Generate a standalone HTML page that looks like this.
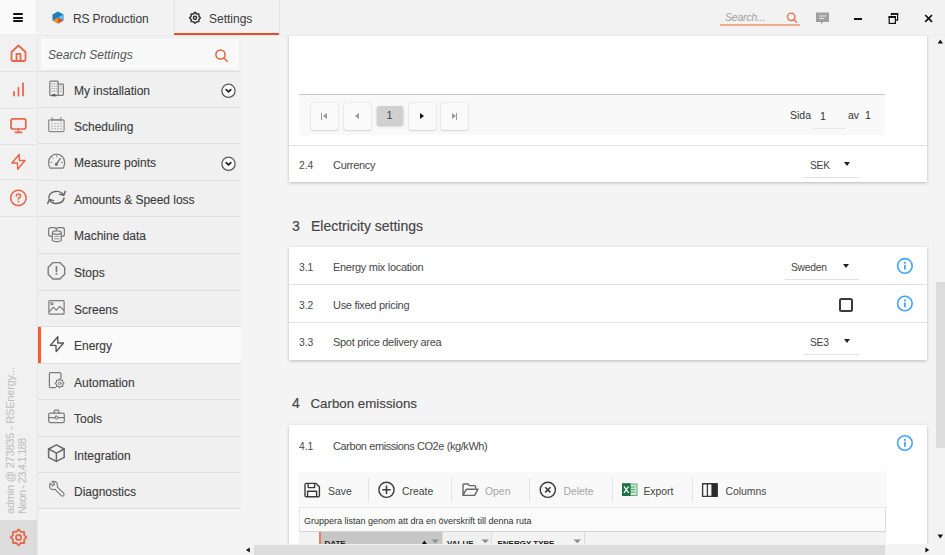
<!DOCTYPE html>
<html><head><meta charset="utf-8">
<style>
*{box-sizing:border-box;margin:0;padding:0}
html,body{width:945px;height:555px;overflow:hidden;background:#f4f4f4;font-family:"Liberation Sans",sans-serif;color:#333}
.abs{position:absolute}
/* rail */
#rail{position:absolute;left:0;top:0;width:38px;height:555px;background:#f1f1f1;border-right:1px solid #e6e6e6}
#burger{position:absolute;left:0;top:0;width:36px;height:34px;background:#fafafa;border-bottom:1px solid #ebebeb;height:35px}
.rl{position:absolute;left:0;width:36px;height:1px;background:#e3e3e3}
#gearbox{position:absolute;left:0;top:520px;width:37px;height:35px;background:#dcdcdc}
/* tabbar */
#tabbar{position:absolute;z-index:2;left:37px;top:0;width:908px;height:36px;background:#f2f2f2;border-bottom:1px solid #ebebeb}
.tabtxt{position:absolute;font-size:12px;color:#3a3a3a;white-space:nowrap}
/* sidebar */
#side{position:absolute;left:38px;top:35px;width:204px;height:520px;background:#f4f4f4}
#sidelist{position:absolute;left:0;top:0;width:203px;height:474px;background:#f0f0f0}
#search{position:absolute;left:3px;top:4px;width:198px;height:30px;background:#f9f9f9}
.item{position:absolute;left:0;width:203px;height:36.5px;border-top:1px solid #dedede}
.item .t{position:absolute;left:36px;top:12px;font-size:12px;color:#3c3c3c;white-space:nowrap;-webkit-text-stroke:0.12px #3c3c3c}
.item.sel{background:#fafafa}
.item.sel::before{content:"";position:absolute;left:0;top:0;width:3px;height:100%;background:#f65c2c}

.ov{position:absolute;left:0;top:0;pointer-events:none}
/* main */
.card{position:absolute;left:289px;width:638px;background:#fff;box-shadow:0 1px 3px rgba(0,0,0,.24)}
.row{position:absolute;left:0;width:638px;border-top:1px solid #e1e1e1}
.num{position:absolute;left:11px;padding-top:1px;font-size:10.3px;color:#4a4a4a;white-space:nowrap}
.lbl{position:absolute;left:45px;font-size:11px;color:#484848;white-space:nowrap;letter-spacing:-0.3px}
.h{position:absolute;left:292px;font-size:14px;color:#444;white-space:nowrap;-webkit-text-stroke:0.15px #444}
.dd{position:absolute;border-bottom:1.5px solid #e2e2e2;height:20px}
.dd .v{position:absolute;font-size:10.3px;color:#444;top:3.5px;letter-spacing:-0.25px}
.arr{position:absolute;width:0;height:0;border-left:3px solid transparent;border-right:3px solid transparent;border-top:4px solid #222;margin-top:-1px;margin-left:-0.5px}
.info{position:absolute}
.card>*{margin-left:-1px}
.card>.row{margin-left:0}
.row>*{margin-left:-1px}
.pbtn{position:absolute;top:7.5px;width:27px;height:27.5px;background:#fafafa;border-radius:2px;box-shadow:0 0 1.5px rgba(0,0,0,.22),0 1px 2px rgba(0,0,0,.1)}
.tri{position:absolute;top:10px;width:0;height:0;border-top:3.5px solid transparent;border-bottom:3.5px solid transparent}
.tri.l{border-right:4.5px solid #999}
.tri.r{border-left:4.5px solid #999}
.tri.r.dark{border-left-color:#111}
.bar{position:absolute;top:10px;width:1.2px;height:7px;background:#999}
.tb{position:absolute;font-size:10.4px;color:#444;white-space:nowrap}
.tb.gr{color:#a5a5a5}
.tsep{position:absolute;top:477.5px;width:1px;height:24px;background:#e3e3e3}
.hd{position:absolute;font-size:8px;font-weight:bold;color:#222;white-space:nowrap}
</style></head><body>

<!-- RAIL -->
<div id="rail">
  <div id="burger">
    <div class="abs" style="left:13px;top:12.8px;width:10.4px;height:1.9px;background:#111;border-radius:1px"></div>
    <div class="abs" style="left:13px;top:16.7px;width:10.4px;height:1.9px;background:#111;border-radius:1px"></div>
    <div class="abs" style="left:13px;top:20.4px;width:10.4px;height:1.9px;background:#111;border-radius:1px"></div>
  </div>
  <div class="rl" style="top:71px"></div>
  <div class="rl" style="top:108px"></div>
  <div class="rl" style="top:144px"></div>
  <div class="rl" style="top:179px"></div>
  <div class="rl" style="top:216px"></div>
  <svg class="abs" style="left:0;top:0" width="37" height="520" fill="none" stroke="#e9664a" stroke-width="1.8" stroke-linejoin="round" stroke-linecap="round">
    <path d="M11.5 52 L18.5 45.5 L25.5 52 V59.5 Q25.5 61 24 61 H13 Q11.5 61 11.5 59.5 Z"/>
    <path d="M16.5 61 V53.8 H20.5 V61"/>
    <path d="M14 95.5 V92 M18.5 95.5 V88 M23 95.5 V83.5" stroke-width="1.8"/>
    <rect x="11" y="118.8" width="14.8" height="10.2" rx="2" stroke-width="1.7"/>
    <path d="M18.4 129 V132.2 M15.3 132.4 H21.7" stroke-width="1.6"/>
    <path d="M19.3 154.4 L11.9 163 H17.4 L17.7 169.2 L25 160.6 H19.3 Z" stroke-width="1.5"/>
    <circle cx="18.4" cy="197.9" r="7.7" stroke-width="1.6"/>
    <path d="M16.3 196.1 Q16.3 194 18.4 194 Q20.6 194 20.6 195.9 Q20.6 197.3 18.4 198.3 V199" stroke-width="1.6"/>
    <circle cx="18.4" cy="201.5" r="0.9" fill="#e9664a" stroke="none"/>
  </svg>
  <div class="abs" style="left:5px;top:366px;width:26px;height:148px;">
    <div class="abs" style="left:0;top:148px;transform-origin:0 0;transform:rotate(-90deg);white-space:nowrap;font-size:11px;line-height:11.5px;color:#bcbcbc;width:160px"><div style="letter-spacing:-0.2px">admin @ 273835 - RSEnergy...</div><div style="letter-spacing:-0.75px">Neon - 23.4.1.188</div></div>
  </div>
  <div id="gearbox">
    <svg class="abs" style="left:0;top:0" width="37" height="35" fill="none" stroke="#e8664a" stroke-width="1.7" stroke-linejoin="round">
      <path d="M18.60 9.40 L20.90 11.86 L24.26 11.74 L24.14 15.10 L26.60 17.40 L24.14 19.70 L24.26 23.06 L20.90 22.94 L18.60 25.40 L16.30 22.94 L12.94 23.06 L13.06 19.70 L10.60 17.40 L13.06 15.10 L12.94 11.74 L16.30 11.86 Z"/>
      <circle cx="18.6" cy="17.4" r="2.6"/>
    </svg>
  </div>
</div>

<!-- TABBAR -->
<div id="tabbar">
  <div class="abs" style="left:137px;top:0;width:1px;height:34px;background:#e4e4e4"></div>
  <div class="abs" style="left:242px;top:0;width:1px;height:34px;background:#e4e4e4"></div>
  <div class="abs" style="left:137px;top:33px;width:105px;height:2px;background:#e8502a"></div>
  <svg class="abs" style="left:15px;top:11px" width="12" height="13" viewBox="0 0 12 13" preserveAspectRatio="none">
    <path d="M6 0.5 L11.5 3.5 V9.5 L6 12.5 L0.5 9.5 V3.5 Z" fill="#1b7fb8"/>
    <path d="M6 6.5 L11.5 3.5 V9.5 Z" fill="#5bc4f0"/>
    <path d="M6 6.5 L0.5 9.5 L6 12.5 Z" fill="#f39221"/>
    <path d="M6 6.5 L11.5 9.5 L6 12.5 Z" fill="#e84c2b"/>
  </svg>
  <div class="tabtxt" style="left:36px;top:12px;letter-spacing:-0.15px">RS Production</div>
  <svg class="abs" style="left:0;top:0" width="300" height="36" fill="none" stroke="#333" stroke-width="1.5" stroke-linejoin="round">
    <path d="M158.00 12.40 L159.61 13.92 L161.82 13.98 L161.88 16.19 L163.40 17.80 L161.88 19.41 L161.82 21.62 L159.61 21.68 L158.00 23.20 L156.39 21.68 L154.18 21.62 L154.12 19.41 L152.60 17.80 L154.12 16.19 L154.18 13.98 L156.39 13.92 Z"/>
    <circle cx="158" cy="17.8" r="1.6"/>
  </svg>
  <div class="tabtxt" style="left:172px;top:12px">Settings</div>
  <!-- right controls -->
  <div class="abs" style="left:683px;top:24px;width:80px;height:1.5px;background:#f3ab8e"></div>
  <div class="abs" style="left:688px;top:11px;font-size:10.5px;font-style:italic;color:#a0a0a0;letter-spacing:-0.2px">Search...</div>
  <svg class="abs" style="left:749px;top:12px" width="12" height="12" fill="none" stroke="#e96f55" stroke-width="1.4"><circle cx="5.2" cy="4.8" r="3.7"/><path d="M7.9 7.5 L10.6 10.2" stroke-linecap="round"/></svg>
  <svg class="abs" style="left:778px;top:11px" width="15" height="15"><path d="M1 1.5 H14 V11 H8 L6 13.5 V11 H1 Z" fill="#a0a0a0"/><path d="M4 5 H11 M4 7.5 H9" stroke="#e8e8e8" stroke-width="1"/></svg>
  <div class="abs" style="left:817px;top:18.2px;width:7.8px;height:2px;background:#111"></div>
  <svg class="abs" style="left:851px;top:12px" width="12" height="13" fill="none" stroke="#111" stroke-width="1.2"><rect x="1.2" y="4.6" width="6.2" height="6.8"/><rect x="0.6" y="4" width="7.4" height="2" fill="#111" stroke="none"/><path d="M3.4 3.2 V1.6 H9.6 V8.2 H8"/><rect x="3.4" y="1" width="6.8" height="1.8" fill="#111" stroke="none"/></svg>
  <svg class="abs" style="left:887px;top:14px" width="9" height="9" fill="none" stroke="#111" stroke-width="1.7"><path d="M1.2 1 L8 7.8 M8 1 L1.2 7.8"/></svg>
</div>

<!-- SIDEBAR -->
<div id="side">
  <div id="sidelist">
    <div id="search">
      <div class="abs" style="left:7px;top:9px;font-size:12px;font-style:italic;color:#555">Search Settings</div>
      <svg class="abs" style="left:174px;top:10px" width="13" height="13" fill="none" stroke="#e8603c" stroke-width="1.5"><circle cx="5.5" cy="5.5" r="4.6"/><path d="M9 9 L12.2 12.2" stroke-linecap="round"/></svg>
    </div>
    <div class="item" style="top:36px"><div class="t">My installation</div></div>
    <div class="item" style="top:72px"><div class="t">Scheduling</div></div>
    <div class="item" style="top:108px"><div class="t">Measure points</div></div>
    <div class="item" style="top:145px"><div class="t" style="letter-spacing:-0.05px">Amounts &amp; Speed loss</div></div>
    <div class="item" style="top:181px"><div class="t">Machine data</div></div>
    <div class="item" style="top:218px"><div class="t">Stops</div></div>
    <div class="item" style="top:255px"><div class="t">Screens</div></div>
    <div class="item sel" style="top:291px;height:37px"><div class="t">Energy</div></div>
    <div class="item" style="top:328px"><div class="t">Automation</div></div>
    <div class="item" style="top:364px"><div class="t">Tools</div></div>
    <div class="item" style="top:401px"><div class="t">Integration</div></div>
    <div class="item" style="top:437px"><div class="t">Diagnostics</div></div>
    <div class="abs" style="left:0;top:473px;width:203px;height:1px;background:#dedede"></div>
  </div>
</div>

<svg class="ov" width="945" height="555" fill="none" stroke="#7b7b7b" stroke-width="1.2" stroke-linejoin="round" stroke-linecap="round">
  <!-- building -->
  <rect x="49.8" y="81.2" width="8.4" height="14.2" rx="1"/>
  <path d="M58.2 84.2 H62.6 Q63.4 84.2 63.4 85 V94.6 Q63.4 95.4 62.6 95.4 H58.2"/>
  <path d="M51.8 83.8h1M54 83.8h1M56.2 83.8h0.6M51.8 86.2h1M54 86.2h1M56.2 86.2h0.6M51.8 88.6h1M54 88.6h1M56.2 88.6h0.6M51.8 91h1M54 91h1M56.2 91h0.6M60 86.6h1.4M60 89h1.4M60 91.4h1.4" stroke-width="0.9" stroke="#a8a8a8"/>
  <path d="M51.8 95.6 Q54 92.6 56.2 95.6 Z" fill="#555" stroke="#555" stroke-width="0.8"/>
  <!-- calendar -->
  <rect x="48.7" y="119.8" width="15.4" height="11.8" rx="1.3" stroke="#8a8a8a"/>
  <path d="M52.2 117.6 V121 M60.8 117.6 V121 M53 119.8 H60" stroke="#8a8a8a"/>
  <path d="M51.5 123.8h1M54.5 123.8h1M57.5 123.8h1M60.5 123.8h1M51.5 126.3h1M54.5 126.3h1M57.5 126.3h1M60.5 126.3h1M51.5 128.8h1M54.5 128.8h1M57.5 128.8h1M60.5 128.8h1" stroke-width="0.9" stroke="#a8a8a8"/>
  <!-- gauge -->
  <path d="M50.2 168.2 Q48.6 166.2 48.6 162.2 A8 8 0 0 1 64.6 162.2 Q64.6 166.2 63 168.2 Z"/>
  <path d="M56.6 164 L60.2 158.6" stroke-width="1.5"/>
  <circle cx="56.4" cy="164.2" r="1.1" fill="#717171"/>
  <path d="M50.8 162.4h1M61.6 162.4h1M52.4 157.8l.6.6M56.6 155.8v1" stroke-width="1"/>
  <!-- refresh -->
  <path d="M48.93 197.92 A7.6 6.0 0 0 1 63.64 195.35" stroke="#666" stroke-width="1.5"/>
  <path d="M65.24 191.35 L63.64 195.35 L59.44 194.15" stroke="#666" stroke-width="1.5"/>
  <path d="M64.07 197.92 A7.6 6.0 0 0 1 49.36 199.45" stroke="#666" stroke-width="1.5"/>
  <path d="M47.76 203.45 L49.36 199.45 L53.56 200.65" stroke="#666" stroke-width="1.5"/>
  <!-- machine data -->
  <path d="M52 236.2 H50.6 Q48.6 236.2 48.6 234.2 V229.8 Q48.6 227.6 50.8 227.6 H54.2 Q56.4 227.6 56.4 229.8 Q56.4 227.6 58.6 227.6 H62.2 Q64.4 227.6 64.4 229.8 V234.2 Q64.4 236.2 62.4 236.2 H61.2"/>
  <path d="M52.4 232.6 V240.4 Q56.8 243 61.2 240.4 V232.6"/>
  <ellipse cx="56.8" cy="232.6" rx="4.4" ry="1.7" fill="#f0f0f0"/>
  <path d="M54.6 236.4 H59 M54.6 238.8 H59" stroke-width="1" stroke="#999"/>
  <!-- stops octagon -->
  <path d="M53.0 262.6 H59.9 L64.7 267.4 V274.2 L59.9 279 H53.0 L48.2 274.2 V267.4 Z" stroke-width="1.4"/>
  <path d="M56.45 266.8 V271.4" stroke-width="1.7"/>
  <circle cx="56.45" cy="273.9" r="0.9" fill="#7b7b7b" stroke="none"/>
  <!-- screens -->
  <rect x="48.9" y="300.6" width="15.2" height="13.6" rx="1"/>
  <path d="M49.6 311.4 L53.4 307.2 L56.2 310.2 L59.8 306.4 L63.6 310.2"/>
  <circle cx="51.9" cy="303.6" r="1.1"/>
  <!-- automation -->
  <path d="M55.4 387.6 H50.8 Q49.4 387.6 49.4 386.2 V374 Q49.4 372.6 50.8 372.6 H59.6 Q61 372.6 61 374 V378.4"/>
  <path d="M59.60 378.90 L60.86 380.25 L62.71 380.19 L62.65 382.04 L64.00 383.30 L62.65 384.56 L62.71 386.41 L60.86 386.35 L59.60 387.70 L58.34 386.35 L56.49 386.41 L56.55 384.56 L55.20 383.30 L56.55 382.04 L56.49 380.19 L58.34 380.25 Z" fill="#f0f0f0" stroke-width="1.1"/>
  <circle cx="59.6" cy="383.3" r="1.3" stroke-width="1"/>
  <!-- tools -->
  <rect x="48.7" y="413.2" width="15.6" height="9.4" rx="1.6"/>
  <path d="M54.2 413.2 V411.2 Q54.2 410.2 55.2 410.2 H57.8 Q58.8 410.2 58.8 411.2 V413.2 M48.7 417.6 H64.3"/>
  <rect x="55.3" y="416.2" width="2.4" height="2.8" rx="0.5" fill="#f0f0f0" stroke-width="1"/>
  <!-- cube -->
  <path d="M56.4 444.8 L64.2 449 V457.4 L56.4 461.4 L48.6 457.4 V449 Z" stroke="#6a6a6a" stroke-width="1.5"/>
  <path d="M48.6 449 L56.4 453.2 L64.2 449 M56.4 453.2 V461.4" stroke="#6a6a6a" stroke-width="1.5"/>
  <!-- wrench -->
  <path d="M50.2 483.2 L52.8 485.8 L54.6 484.2 L52 481.6 Q55.4 480.6 57 483.2 Q58 485 57.2 486.8 L63.6 493.2 Q64.6 494.4 63.6 495.6 Q62.4 496.6 61.2 495.6 L54.8 489.2 Q52.8 490 51 489 Q48.6 487.2 50.2 483.2 Z"/>
  <!-- chevrons -->
  <circle cx="228.5" cy="90.8" r="6.6" stroke="#5a5a5a" stroke-width="1.3" fill="#fbfbfb"/>
  <path d="M226.2 89.6 L228.5 91.9 L230.8 89.6" stroke="#222" stroke-width="1.7"/>
  <circle cx="228.5" cy="163.8" r="6.6" stroke="#5a5a5a" stroke-width="1.3" fill="#fbfbfb"/>
  <path d="M226.2 162.6 L228.5 164.9 L230.8 162.6" stroke="#222" stroke-width="1.7"/>
  <!-- bolt energy -->
  <path d="M57.8 336.8 L50.4 345.4 H55.9 L56.2 351.6 L63.5 343 H57.8 Z" stroke="#555" stroke-width="1.4"/>
</svg>

<!-- MAIN -->
<div id="main" style="position:absolute;left:242px;top:36px;width:690px;height:509px;overflow:hidden;background:#f4f4f4">
<div style="position:absolute;left:-242px;top:-36px;width:945px;height:555px">
  <!-- card 1 -->
  <div class="card" style="top:10px;height:172px">
    <div class="abs" style="left:11px;top:84px;width:586px;height:41px;background:#f9f9f9;border-top:1px solid #c9c9c9">
      <div class="pbtn" style="left:12px"><div class="tri l" style="left:11.5px"></div><div class="bar" style="left:10.2px"></div></div>
      <div class="pbtn" style="left:44.7px"><div class="tri l" style="left:11px"></div></div>
      <div class="abs" style="left:77.5px;top:11px;width:26px;height:19px;background:#d0d0d0;border-radius:2px;box-shadow:0 1px 2.5px rgba(0,0,0,.28);font-size:11px;color:#444;text-align:center;line-height:19px">1</div>
      <div class="pbtn" style="left:109.6px"><div class="tri r dark" style="left:11.5px"></div></div>
      <div class="pbtn" style="left:142px"><div class="tri r" style="left:10.5px"></div><div class="bar" style="left:15.2px"></div></div>
      <div class="abs" style="left:491px;top:14px;font-size:10.5px;color:#333">Sida</div>
      <div class="abs" style="left:514px;top:33px;width:32px;height:1px;background:#e8e8e8"></div>
      <div class="abs" style="left:521px;top:15px;font-size:10.5px;color:#333">1</div>
      <div class="abs" style="left:549px;top:14px;font-size:10.5px;color:#333">av</div>
      <div class="abs" style="left:566px;top:14px;font-size:10.5px;color:#333">1</div>
    </div>
    <div class="row" style="top:135px;height:38px">
      <div class="num" style="top:13px">2.4</div><div class="lbl" style="top:13px">Currency</div>
      <div class="dd" style="left:516px;top:10px;width:55px;height:22px"><div class="v" style="left:6px">SEK</div><div class="arr" style="left:40px;top:7px"></div></div>
    </div>
  </div>
  <div class="h" style="top:218px">3</div><div class="h" style="top:218px;left:311px">Electricity settings</div>
  <!-- card 2 -->
  <div class="card" style="top:247px;height:113px">
    <div class="row" style="top:0;height:38px;border-top:none">
      <div class="num" style="top:14px">3.1</div><div class="lbl" style="top:14px">Energy mix location</div>
      <div class="dd" style="left:497px;top:11px;width:74px;height:22px"><div class="v" style="left:6px">Sweden</div><div class="arr" style="left:58px;top:7px"></div></div>
    </div>
    <div class="row" style="top:37px;height:38px">
      <div class="num" style="top:14px">3.2</div><div class="lbl" style="top:14px">Use fixed pricing</div>
      <div class="abs" style="left:550.5px;top:12.5px;width:14px;height:14px;border:2px solid #3a3a3a;border-radius:2.5px;background:#fcfcfc"></div>
    </div>
    <div class="row" style="top:75px;height:37px">
      <div class="num" style="top:13px">3.3</div><div class="lbl" style="top:13px">Spot price delivery area</div>
      <div class="dd" style="left:516px;top:10px;width:55px;height:22px"><div class="v" style="left:6px">SE3</div><div class="arr" style="left:40px;top:7px"></div></div>
    </div>
  </div>
  <div class="h" style="top:395px">4</div><div class="h" style="top:395.5px;left:310.5px;font-size:13.3px">Carbon emissions</div>
  <!-- card 3 -->
  <div class="card" style="top:425px;height:200px">
    <div class="num" style="top:15px">4.1</div><div class="lbl" style="top:15px;letter-spacing:-0.42px">Carbon emissions CO2e (kg/kWh)</div>
    <div class="abs" style="left:11px;top:46.5px;width:587px;height:36.5px;background:#f9f9f9;border-bottom:1px solid #e8e8e8;box-shadow:0 0 1px rgba(0,0,0,.12)"></div>
    <div class="abs" style="left:11px;top:83px;width:587px;height:24px;background:#fbfbfb;border-left:1px solid #e8e8e8;border-right:1px solid #dadada;border-bottom:1px solid #d4d4d4"></div>
    <div class="abs" style="left:16px;top:90.5px;font-size:9px;color:#333;white-space:nowrap">Gruppera listan genom att dra en överskrift till denna ruta</div>
    <div class="abs" style="left:11px;top:107px;width:587px;height:30px;background:#f3f3f3"></div>
    <div class="abs" style="left:31px;top:107px;width:2px;height:30px;background:#e8805a"></div>
    <div class="abs" style="left:33px;top:107px;width:121px;height:30px;background:#c6c6c6"></div>
  </div>
<!-- info icons -->
  <svg class="ov" width="945" height="555" fill="none" stroke="#45a5f7" stroke-width="1.6">
    <circle cx="904.9" cy="265.9" r="7.3"/><path d="M904.9 265.0 V269.6" stroke-width="1.8"/><rect x="904" y="261.9" width="1.8" height="1.8" fill="#45a5f7" stroke="none"/>
    <circle cx="904.9" cy="303.5" r="7.3"/><path d="M904.9 302.6 V307.2" stroke-width="1.8"/><rect x="904" y="299.5" width="1.8" height="1.8" fill="#45a5f7" stroke="none"/>
    <circle cx="904.9" cy="443" r="7.3"/><path d="M904.9 442.1 V446.7" stroke-width="1.8"/><rect x="904" y="439.0" width="1.8" height="1.8" fill="#45a5f7" stroke="none"/>
  </svg>
  <!-- toolbar items -->
  <svg class="ov" width="945" height="555" fill="none" stroke="#3a3a3a" stroke-width="1.4" stroke-linejoin="round">
    <path d="M305 484.6 Q305 483.4 306.2 483.4 H316 L319.4 486.8 V495.6 Q319.4 496.8 318.2 496.8 H306.2 Q305 496.8 305 495.6 Z"/>
    <path d="M308.2 483.4 V487.6 H314.6 V483.4 M307.6 496.8 V491.2 H316.6 V496.8"/>
    <circle cx="386.5" cy="489.8" r="7.6"/>
    <path d="M386.5 485.6 V494 M382.3 489.8 H390.7" stroke-width="1.5"/>
    <path d="M463 485 Q463 484 464 484 H468 L469.4 485.6 H474.6 Q475.6 485.6 475.6 486.6 V488.2 M463 485 V495.4 H474.6 L478 489.2 H466.4 L463 495.4" stroke="#666" stroke-width="1.4"/>
    <circle cx="547.8" cy="489.8" r="7.6"/>
    <path d="M545.2 487.2 L550.4 492.4 M550.4 487.2 L545.2 492.4" stroke-width="1.6"/>
    <rect x="702.6" y="483.8" width="14.6" height="12.6" stroke-width="1.4"/>
    <path d="M707.4 483.8 V496.4 M712 483.8 V496.4" stroke-width="1.3"/>
    <rect x="712" y="483.8" width="5.2" height="12.6" fill="#2a2a2a" stroke="none"/>
  </svg>
  <svg class="ov" width="945" height="555">
    <rect x="627" y="484" width="10" height="11.5" fill="#cfe7d8" stroke="#3a9b5e" stroke-width="0.8"/>
    <path d="M630 487h5M630 489.5h5M630 492h5" stroke="#3a9b5e" stroke-width="0.9"/>
    <rect x="622" y="483.2" width="8.6" height="12.8" fill="#1f7244"/>
    <path d="M624 486.4 L628.6 492.8 M628.6 486.4 L624 492.8" stroke="#fff" stroke-width="1.2"/>
  </svg>
  <div class="tb" style="left:328.0px;top:486px">Save</div>
  <div class="tb" style="left:402.0px;top:486px">Create</div>
  <div class="tb gr" style="left:485.0px;top:486px">Open</div>
  <div class="tb gr" style="left:563.5px;top:486px">Delete</div>
  <div class="tb" style="left:643.4px;top:486px">Export</div>
  <div class="tb" style="left:725.5px;top:486px">Columns</div>
  <div class="tsep" style="left:368px"></div>
  <div class="tsep" style="left:451px"></div>
  <div class="tsep" style="left:529px"></div>
  <div class="tsep" style="left:612px"></div>
  <div class="tsep" style="left:692px"></div>
  <!-- header row -->
  <div class="abs" style="left:442px;top:532px;width:50px;height:12px;background:#f0f0f0;border-left:1px solid #e0e0e0"></div>
  <div class="hd" style="left:324.5px;top:539px">DATE</div>
  <div class="hd" style="left:447px;top:539px">VALUE</div>
  <div class="hd" style="left:497.5px;top:539px">ENERGY TYPE</div>
  <svg class="ov" width="945" height="555">
    <path d="M422 544 L424.4 540.6 L426.8 544 Z" fill="#111"/>
    <path d="M431.6 539.4 H439 L435.3 543.2 Z" fill="#8c8c8c"/>
    <path d="M481.6 539.4 H489 L485.3 543.2 Z" fill="#8c8c8c"/>
    <path d="M573.6 539.4 H581 L577.3 543.2 Z" fill="#8c8c8c"/>
    <path d="M491.5 532 V544 M584.5 532 V544" stroke="#dcdcdc" stroke-width="1"/>
  </svg>
</div>
</div>
<!-- scrollbars -->
<div class="abs" style="left:932px;top:35px;width:13px;height:520px;background:#f3f3f3"></div>
<div class="abs" style="left:936px;top:282px;width:9px;height:166px;background:#dcdcdc"></div>
<div class="abs" style="left:242px;top:544px;width:690px;height:11px;background:#f3f3f3"></div>
<div class="abs" style="left:254px;top:545px;width:631px;height:10px;background:#dcdcdc"></div>
<svg class="ov" width="945" height="555">
  <path d="M937.6 43.5 L940.3 39.7 L943 43.5 Z" fill="#111"/>
  <path d="M937.6 534.6 H943 L940.3 538.4 Z" fill="#111"/>
  <path d="M249.8 547.4 V552.4 L246 549.9 Z" fill="#111"/>
  <path d="M925.4 547.4 V552.4 L929.2 549.9 Z" fill="#111"/>
</svg>

</body></html>
